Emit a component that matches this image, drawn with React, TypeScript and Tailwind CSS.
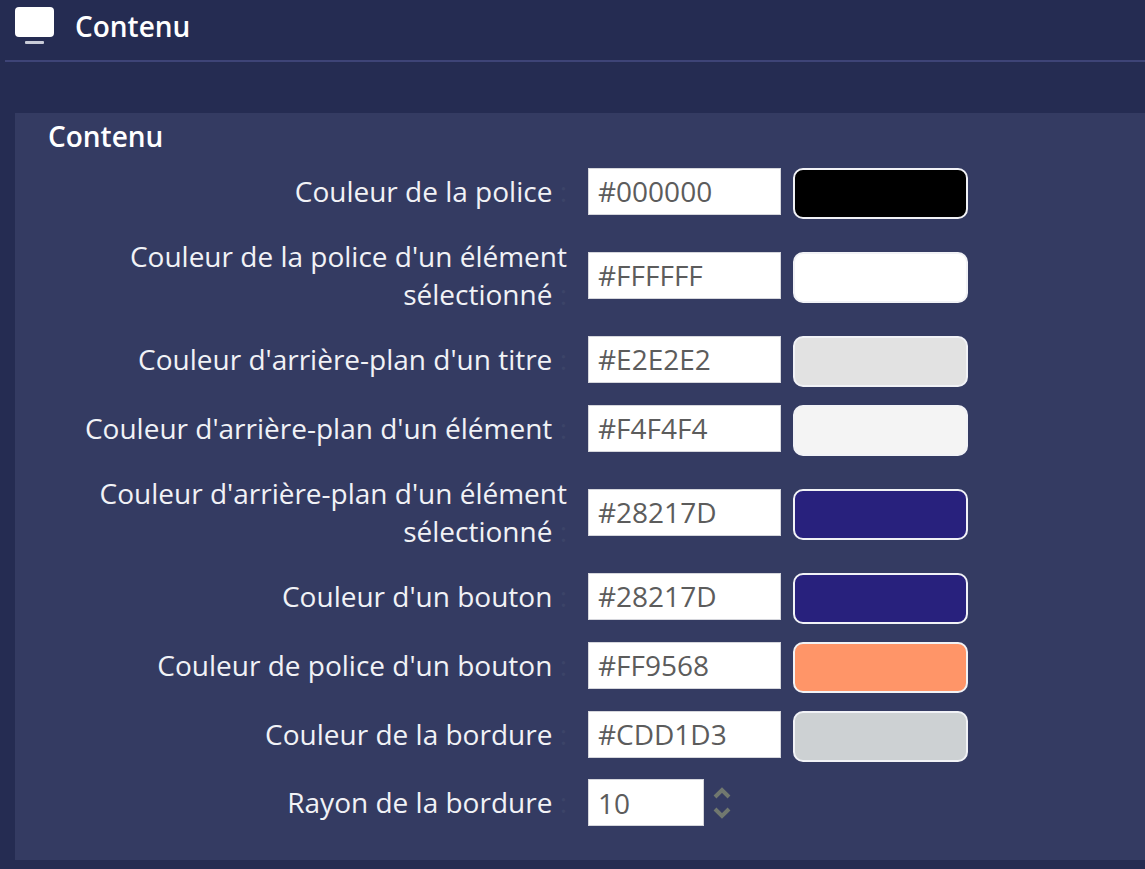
import React from 'react';

interface ColorRow {
  label: string;
  value: string;
  swatch: string;
  tall?: boolean;
}

const rows: ColorRow[] = [
  { label: 'Couleur de la police', value: '#000000', swatch: 'bg-[#000000]' },
  { label: "Couleur de la police d'un élément sélectionné", value: '#FFFFFF', swatch: 'bg-[#FFFFFF]', tall: true },
  { label: "Couleur d'arrière-plan d'un titre", value: '#E2E2E2', swatch: 'bg-[#E2E2E2]' },
  { label: "Couleur d'arrière-plan d'un élément", value: '#F4F4F4', swatch: 'bg-[#F4F4F4]' },
  { label: "Couleur d'arrière-plan d'un élément sélectionné", value: '#28217D', swatch: 'bg-[#28217D]', tall: true },
  { label: "Couleur d'un bouton", value: '#28217D', swatch: 'bg-[#28217D]' },
  { label: "Couleur de police d'un bouton", value: '#FF9568', swatch: 'bg-[#FF9568]' },
  { label: 'Couleur de la bordure', value: '#CDD1D3', swatch: 'bg-[#CDD1D3]' },
];

const Label = ({ text, className = '' }: { text: string; className?: string }) => (
  <label className={`w-[519px] shrink-0 text-right leading-[38px] text-[#f1f2f6] ${className}`}>
    {text}
    <span className="text-[#3c4468]"> :</span>
  </label>
);

export default function App() {
  return (
    <div className="h-[869px] w-[1145px] overflow-hidden bg-[#252c52] font-['Open_Sans',sans-serif] text-[28px]">
      <div className="ml-[5px] flex h-[62px] items-start border-b-2 border-[#3e4477] pl-[10px]">
        <svg width="40" height="40" viewBox="0 0 40 40" className="mt-[6px]">
          <rect x="0" y="1" width="39" height="30" rx="4" fill="#ffffff" />
          <rect x="10" y="35" width="19" height="3" rx="1" fill="#c9ccd8" />
        </svg>
        <span className="ml-[20px] mt-[8px] font-semibold leading-[36px] text-white">Contenu</span>
      </div>
      <div className="ml-[15px] mt-[51px] h-[747px] bg-[#343b62] pl-[33px]">
        <h2 className="h-[55px] pt-[5px] font-semibold leading-[36px] text-white">Contenu</h2>
        <div className="flex flex-col gap-[18px]">
          {rows.map((row) => (
            <div key={row.label} className={`flex items-center ${row.tall ? 'h-[81px]' : 'h-[51px]'}`}>
              <Label text={row.label} className="-mt-[5px]" />
              <div className="ml-[21px] flex items-start">
                <input
                  readOnly
                  value={row.value}
                  className="h-[47px] w-[193px] border border-[#d5d6dc] bg-white pb-[2px] pl-[9px] text-[#5c5c5c] outline-none"
                />
                <div className={`ml-[12px] h-[51px] w-[175px] rounded-[10px] border-2 border-[#f1f2f6] ${row.swatch}`} />
              </div>
            </div>
          ))}
          <div className="-mt-[1px] flex h-[47px] items-center">
            <Label text="Rayon de la bordure" className="-mt-[1px]" />
            <input
              readOnly
              value="10"
              className="ml-[21px] h-[47px] w-[116px] border border-[#d5d6dc] bg-white pl-[9px] text-[#5c5c5c] outline-none"
            />
            <svg width="18" height="34" viewBox="0 0 18 34" fill="none" stroke="#71786f" strokeWidth="4" className="ml-[9px]">
              <path d="M2 11 L9 4 L16 11" />
              <path d="M2 23 L9 30 L16 23" />
            </svg>
          </div>
        </div>
      </div>
    </div>
  );
}
